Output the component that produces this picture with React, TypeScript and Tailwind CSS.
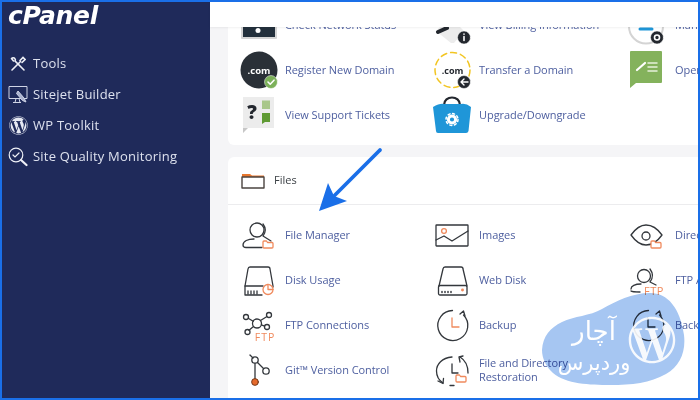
import { FaWordpress, FaWordpressSimple } from 'react-icons/fa';
import type { ReactNode } from 'react';

const INK = '#33373c';
const ORANGE = '#f08a5d';

function Svg({ w = 40, h = 40, children }: { w?: number; h?: number; children: ReactNode }) {
  return (
    <svg width={w} height={h} viewBox={`0 0 ${w} ${h}`} fill="none" stroke={INK} strokeWidth="1.3" strokeLinecap="round" strokeLinejoin="round" className="overflow-visible">
      {children}
    </svg>
  );
}

const MiniFolder = ({ x, y }: { x: number; y: number }) => (
  <path d={`M${x} ${y + 1}q0-1 1-1h2.500l1 1.500h4.500q1 0 1 1v3.500q0 1-1 1h-8q-1 0-1-1z`} stroke={ORANGE} fill="#fff" />
);

const Badge = ({ fill = '#23272e', cx, cy, children }: { fill?: string; cx: number; cy: number; children: ReactNode }) => (
  <g>
    <circle cx={cx} cy={cy} r="6.5" fill={fill} stroke="#fff" strokeWidth="0.5" />
    {children}
  </g>
);

function ComIcon() {
  return (
    <Svg>
      <circle cx="19" cy="20" r="18.5" fill="#2a3037" stroke="none" />
      <text x="19" y="23.5" textAnchor="middle" fill="#fff" stroke="none" fontSize="9.5" fontWeight="700" fontFamily="Open Sans, sans-serif">.com</text>
      <Badge fill="#7cb15a" cx={31} cy={32}>
        <path d="M28 32l2.200 2.200 3.800-4" stroke="#fff" strokeWidth="1.6" />
      </Badge>
    </Svg>
  );
}

function TransferIcon() {
  return (
    <Svg>
      <circle cx="18.5" cy="20" r="17.5" stroke="#f2c522" strokeWidth="1.5" strokeDasharray="6 4" />
      <text x="18.5" y="23.5" textAnchor="middle" fill="#23272e" stroke="none" fontSize="9" fontWeight="700" fontFamily="Open Sans, sans-serif">.com</text>
      <Badge cx={30} cy={32}>
        <path d="M34 32h-7M30 29l-3 3 3 3" stroke="#fff" strokeWidth="1.4" />
      </Badge>
    </Svg>
  );
}

function TicketsIcon() {
  return (
    <Svg>
      <path d="M3 2h31v31H7l-4 5z" fill="#ececec" stroke="none" />
      <path d="M3 33h5l-5 5z" fill="#c7c7c7" stroke="none" />
      <text x="12" y="24" textAnchor="middle" fill="#23272e" stroke="none" fontSize="19" fontWeight="800" fontFamily="Open Sans, sans-serif">?</text>
      <path d="M22 5.500h8v8.500h-8z" fill="#a9c78a" stroke="none" />
      <path d="M22 18h8v9h-5l-3 2z" fill="#5f9a33" stroke="none" />
    </Svg>
  );
}

function BagIcon() {
  return (
    <Svg>
      <path d="M10 10c0-10 16-10 16 0" stroke="#23272e" strokeWidth="2.2" />
      <path d="M-1 12q7-4 11-3h17q5-1 10 3l-2.500 24q-.5 2-2.500 2H4q-2 0-2-2z" fill="#1f96d8" stroke="none" />
      <circle cx="18" cy="24.5" r="3.6" stroke="#fff" strokeWidth="3" />
      <circle cx="18" cy="24.5" r="6" stroke="#fff" strokeWidth="1.5" strokeDasharray="2 2.7" />
    </Svg>
  );
}

function OpenIcon() {
  return (
    <Svg>
      <path d="M1 1h30q1 0 1 1v30q0 1-1 1H6l-6 5V2q0-1 1-1z" fill="#84b25c" stroke="none" />
      <path d="M7 20l8-7" stroke="#fff" strokeWidth="2.2" />
      <path d="M18 13h9M18 17h9M18 21h9" stroke="#e6f1da" strokeWidth="1.5" />
    </Svg>
  );
}

function NetworkIcon() {
  return (
    <Svg>
      <path d="M2 -6h34v39H2z" fill="#23303c" stroke="#d5d5d5" strokeWidth="2" />
      <circle cx="18" cy="25.5" r="2.5" fill="#fff" stroke="none" />
      <path d="M18 10v10" stroke="#fff" strokeWidth="3" />
    </Svg>
  );
}

function BillingIcon() {
  return (
    <Svg>
      <path d="M2 26l14-14 14 14-10 12h-3z" fill="#ececec" stroke="none" />
      <path d="M4 27l9-4" stroke="#23272e" strokeWidth="4" />
      <Badge cx={30} cy={32.5}>
        <path d="M30 31.500v4M30 29v.3" stroke="#fff" strokeWidth="1.6" />
      </Badge>
    </Svg>
  );
}

function ManageIcon() {
  return (
    <Svg>
      <circle cx="16" cy="21.5" r="17" stroke="#d4d4d4" strokeWidth="2" />
      <path d="M10 24h12" stroke="#1f96d8" strokeWidth="3" />
      <Badge cx={27} cy={32.5}>
        <circle cx="27" cy="32.5" r="2.5" stroke="#fff" strokeWidth="1.6" />
      </Badge>
    </Svg>
  );
}

function UserFolderIcon() {
  return (
    <Svg>
      <circle cx="17" cy="15" r="7" />
      <path d="M23 9c3 4 3 8 0 12l8 5" />
      <path d="M14 24c-6 0-11 2-11 6 0 1.500 1 2.500 3 2.500h16" />
      <MiniFolder x={23} y={26} />
    </Svg>
  );
}

function ImagesIcon() {
  return (
    <Svg w={36} h={26}>
      <rect x="2" y="3" width="32" height="21" rx="0.5" />
      <path d="M2 18l8-4 8 5 16-10" />
      <circle cx="10" cy="9" r="2.4" stroke={ORANGE} />
    </Svg>
  );
}

function EyeIcon() {
  return (
    <Svg>
      <path d="M1 20c5-7 10-10 15-10s11 3 16 10c-5 7-11 10-16 10S6 27 1 20z" />
      <circle cx="16" cy="21" r="4" />
      <MiniFolder x={21} y={26} />
    </Svg>
  );
}

function DiskIcon({ pie }: { pie?: boolean }) {
  if (pie) {
    return (
      <Svg>
        <path d="M5 26l3-17q.3-2 2-2h18q2 0 2 2l3 17v1" />
        <path d="M5 26v9h17M5 26h18" />
        <path d="M8 34v-3M11 34v-3M14 34v-3M17 34v-3" />
        <g stroke={ORANGE} fill="#fff">
          <circle cx="28" cy="29.5" r="5" />
          <path d="M28 24.500v5h5" />
        </g>
      </Svg>
    );
  }
  return (
    <Svg>
      <path d="M5 26L9 9q.3-2 2-2h16q2 0 2 2l4 17" />
      <rect x="4.5" y="25.5" width="28.5" height="9.5" rx="1.5" />
      <path d="M8 31.500v1M11 31.500v1M14 31.500v1M17 31.500v1" strokeWidth="1.5" />
      <circle cx="28.5" cy="30" r="0.8" fill={ORANGE} stroke={ORANGE} />
    </Svg>
  );
}

function FtpUserIcon() {
  return (
    <Svg>
      <circle cx="14" cy="16" r="6.5" />
      <path d="M20 9c3 4 3 9 0 13l6 3" />
      <path d="M11 24c-6 0-10 2-10 5M1 31c1 1 5 1 9 1" />
      <text x="24" y="35" textAnchor="middle" fill={ORANGE} stroke="none" fontSize="11" fontFamily="Open Sans, sans-serif" letterSpacing="0.5">FTP</text>
    </Svg>
  );
}

function ConnectIcon() {
  return (
    <Svg>
      <circle cx="17" cy="18.5" r="4.5" />
      <circle cx="6" cy="12" r="2.5" />
      <circle cx="29" cy="10" r="2.5" />
      <circle cx="27" cy="22" r="2.5" />
      <circle cx="7.500" cy="27" r="2.5" />
      <path d="M8.200 13.300l5 3M20.500 15.500l6.500-4M21.500 19.800l3 1.300M13.500 21.500l-4.500 3.800" />
      <text x="25" y="35.500" textAnchor="middle" fill={ORANGE} stroke="none" fontSize="10.5" fontFamily="Open Sans, sans-serif" letterSpacing="1">FTP</text>
    </Svg>
  );
}

function BackupIcon({ dark }: { dark?: boolean }) {
  return (
    <Svg>
      <path d="M18.500 5.500A15 15 0 1 0 29.500 10" />
      <path d="M26 9l3.500-3 1.500 5" />
      <path d="M18 13v9h7" stroke={dark ? '#23303c' : ORANGE} />
    </Svg>
  );
}

function RestoreIcon() {
  return (
    <Svg>
      <path d="M18 7C8 8 2.500 14 2.500 21c0 5 2 9 6.500 12" />
      <path d="M4 31l5 2.500.5-5" />
      <path d="M26 7c5 3 8 9 8 16" />
      <path d="M29 6l-4 1 1 5" />
      <path d="M18 14v9h6" />
      <path d="M16 35.500h4" />
      <MiniFolder x={22} y={25} />
    </Svg>
  );
}

function GitIcon() {
  return (
    <Svg>
      <path d="M10 5l3 3" />
      <circle cx="15" cy="10" r="3.2" />
      <circle cx="26" cy="21" r="3.2" />
      <path d="M17.500 12.500l6 6M15 13.500V29" />
      <circle cx="15" cy="32" r="3.4" fill="#e56a2c" stroke="#5a2a10" strokeWidth="0.8" />
    </Svg>
  );
}

function FolderIcon() {
  return (
    <svg width="24" height="17" viewBox="0 0 24 17" fill="none" strokeLinejoin="round">
      <path d="M1 5V2h8l2 1.500h12V5z" fill="#e8772e" />
      <path d="M1 5h22v11H1z" stroke="#4b4440" strokeWidth="1.4" />
    </svg>
  );
}

function Tile({ icon, label }: { icon: ReactNode; label: ReactNode }) {
  return (
    <div className="flex h-[45px] items-center">
      <div className="flex h-[45px] w-[45px] shrink-0 items-center">{icon}</div>
      <span className="whitespace-nowrap text-[11px] leading-[14px] tracking-[-0.06px] text-[#4f60a0]">{label}</span>
    </div>
  );
}

const SIDE_LINKS: { label: string; icon: ReactNode }[] = [
  {
    label: 'Tools',
    icon: (
      <svg width="16" height="16" viewBox="0 0 16 16" fill="none" stroke="#eef0f6" strokeWidth="1.6" strokeLinecap="round">
        <path d="M2 14L10.500 5.500M10 4.500l3-3 2 2-3 3" />
        <path d="M1.500 2.500c1-1 2.500-1 3.300 0 .7.800.7 1.700.3 2.500L14 14M1.500 2.500L3.500 5" />
      </svg>
    ),
  },
  {
    label: 'Sitejet Builder',
    icon: (
      <svg width="20" height="19" viewBox="0 0 20 19" fill="none" stroke="#cfd4e6" strokeWidth="1">
        <path d="M1 1.500h18v12H1zM5 17.500h8M8 13.500l-1 4M11 13.500l1 4" />
        <path d="M10 6l6 7 2 4-3.500-1.500-6-7z" fill="#aab2cf" />
      </svg>
    ),
  },
  { label: 'WP Toolkit', icon: <FaWordpress className="text-[19px] text-[#e6e9f3]" /> },
  {
    label: 'Site Quality Monitoring',
    icon: (
      <svg width="20" height="20" viewBox="0 0 20 20" fill="none" stroke="#eef0f6" strokeWidth="1.2" strokeLinecap="round">
        <circle cx="8" cy="8" r="6.800" />
        <path d="M5 8l2 2 4-4" />
        <path d="M13 13l5.500 5" strokeWidth="2.2" />
      </svg>
    ),
  },
];

export default function App() {
  return (
    <div className="relative h-[400px] w-[700px] overflow-hidden border-2 border-[#1a6fe8] font-['Open_Sans',sans-serif]">
      <div className="flex h-full">
        <aside className="w-[208px] shrink-0 bg-[#1f2a5a] pl-[6px]">
          <div className="h-[46px] pt-[1px] font-['DejaVu_Sans',sans-serif] text-[25px] font-bold italic leading-[26px] tracking-[-0.3px] text-white">
            cPanel
          </div>
          {SIDE_LINKS.map((link) => (
            <div key={link.label} className="flex h-[31px] items-center gap-[5px]">
              <span className="flex w-[20px] justify-center">{link.icon}</span>
              <span className="text-[13px] tracking-[0.23px] text-[#dde1ee]">{link.label}</span>
            </div>
          ))}
        </aside>

        <main className="flex min-w-0 flex-1 flex-col bg-[#f5f5f7]">
          <div className="relative z-10 h-[25px] shrink-0 bg-white shadow-[0_1px_2px_rgba(0,0,0,0.06)]" />
          <div className="flex-1 overflow-hidden pl-[18px]">
            <section className="-mt-[25px] w-[500px] rounded-[6px] bg-white pb-[8px] pl-[12px]">
              <div className="grid grid-cols-[194px_196px_110px]">
                <Tile icon={<NetworkIcon />} label="Check Network Status" />
                <Tile icon={<BillingIcon />} label="View Billing Information" />
                <Tile icon={<ManageIcon />} label="Manage Team" />
                <Tile icon={<ComIcon />} label="Register New Domain" />
                <Tile icon={<TransferIcon />} label="Transfer a Domain" />
                <Tile icon={<OpenIcon />} label="Open Ticket" />
                <Tile icon={<TicketsIcon />} label="View Support Tickets" />
                <Tile icon={<BagIcon />} label="Upgrade/Downgrade" />
              </div>
            </section>

            <section className="mt-[12px] w-[500px] rounded-[6px] bg-white pb-[20px]">
              <div className="flex h-[48px] items-center gap-[9px] border-b border-[#ececee] pl-[13px] text-[11px] text-[#3c4146]">
                <FolderIcon />
                <span>Files</span>
              </div>
              <div className="grid grid-cols-[194px_196px_110px] pl-[12px] pt-[7px]">
                <Tile icon={<UserFolderIcon />} label="File Manager" />
                <Tile icon={<ImagesIcon />} label="Images" />
                <Tile icon={<EyeIcon />} label="Directory Privacy" />
                <Tile icon={<DiskIcon pie />} label="Disk Usage" />
                <Tile icon={<DiskIcon />} label="Web Disk" />
                <Tile icon={<FtpUserIcon />} label="FTP Accounts" />
                <Tile icon={<ConnectIcon />} label="FTP Connections" />
                <Tile icon={<BackupIcon />} label="Backup" />
                <Tile icon={<BackupIcon dark />} label="Backup Wizard" />
                <Tile icon={<GitIcon />} label="Git™ Version Control" />
                <Tile
                  icon={<RestoreIcon />}
                  label={
                    <>
                      File and Directory
                      <br />
                      Restoration
                    </>
                  }
                />
              </div>
            </section>
          </div>
        </main>
      </div>

      {/* arrow over the page */}
      <svg className="absolute left-[308px] top-[140px]" width="80" height="75" viewBox="310 142 80 75" fill="none">
        <path d="M380 150L334 196" stroke="#1a6fe8" strokeWidth="3.8" strokeLinecap="round" />
        <path d="M319 211L328 183 334 196 347 201z" fill="#1a6fe8" />
      </svg>

      {/* watermark */}
      <div className="absolute left-[538px] top-[289px] h-[96px] w-[146px]">
        <svg className="absolute inset-0 mix-blend-multiply" width="146" height="96" viewBox="540 291 146 96">
          <path
            d="M542 350C543 336 550 328 562 322C574 316 590 316 602 309C616 301 632 293 650 293C668 293 680 308 684 335C686 352 680 366 666 374C650 383 632 385 610 385C590 385 566 384 553 373C546 367 542 358 542 350z"
            fill="#a6c6f2"
          />
        </svg>
        <FaWordpressSimple className="absolute left-[88px] top-[25px] text-[48px] text-white opacity-90" />
        <div
          dir="rtl"
          className="absolute left-[8px] top-[25px] w-[92px] text-center font-['DejaVu_Sans',sans-serif] text-[21px] leading-[30px] text-white"
        >
          <span className="text-[26px]">آچار</span>
          <br />
          وردپرس
        </div>
      </div>
    </div>
  );
}
